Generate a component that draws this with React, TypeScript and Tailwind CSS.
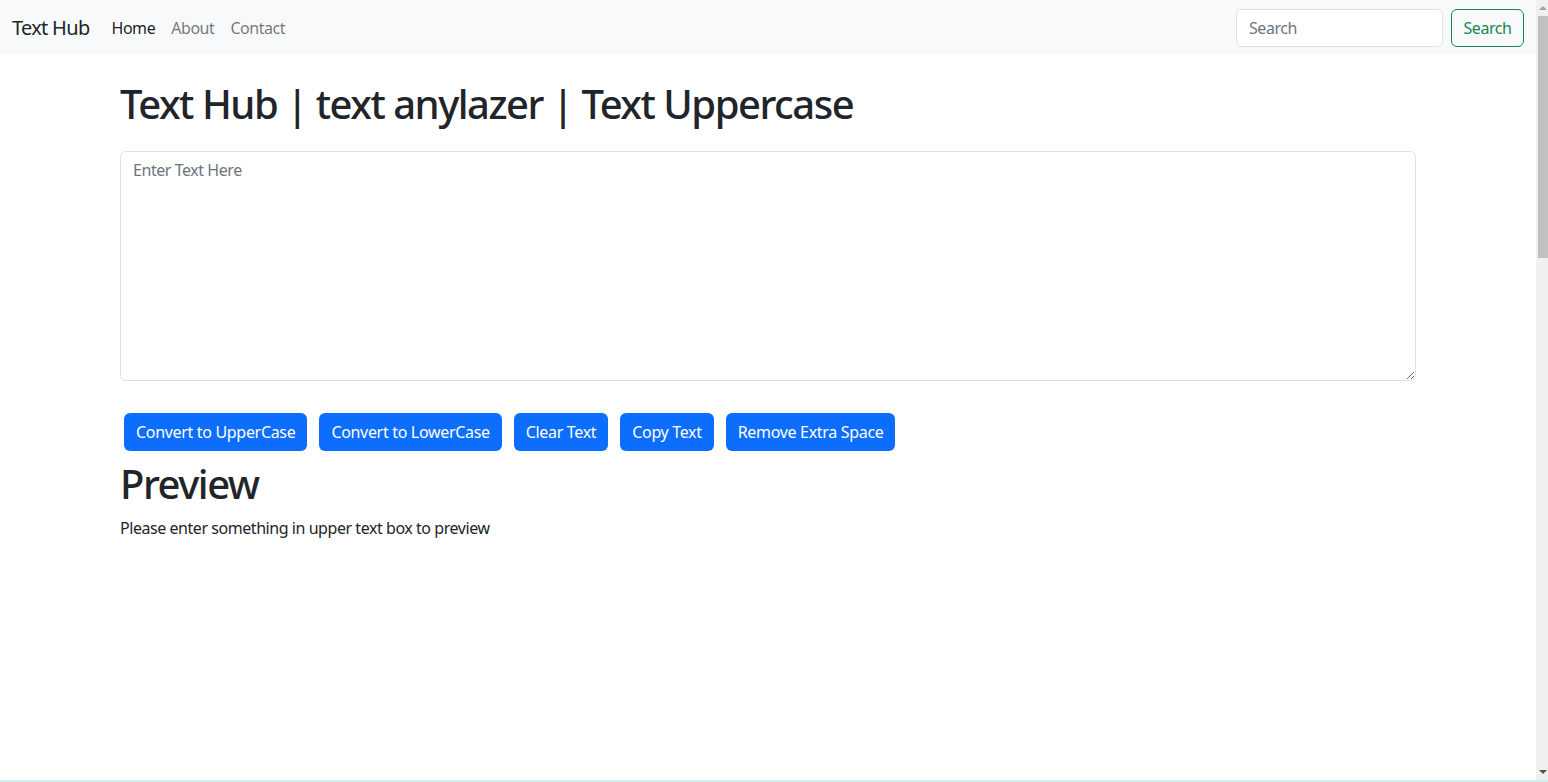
import { useState } from 'react'

const font = { fontFamily: '"Noto Sans", "Liberation Sans", sans-serif' }

function Navbar() {
  return (
    <nav className="h-[55px] bg-[#f8f9fa] flex items-center px-3">
      <span className="text-[20px] text-[#212529] mr-[14px] leading-[30px] tracking-[-0.035em]">Text Hub</span>
      <ul className="flex items-center text-[16px]">
        <li className="px-2 text-[rgba(0,0,0,0.9)]">Home</li>
        <li className="px-2 text-[rgba(0,0,0,0.55)]">About</li>
        <li className="px-2 text-[rgba(0,0,0,0.55)]">Contact</li>
      </ul>
      <form className="ml-auto flex items-center gap-2" onSubmit={(e) => e.preventDefault()}>
        <input
          type="search"
          placeholder="Search"
          className="w-[207px] h-[38px] px-3 rounded-[6px] border border-[#dee2e6] bg-white text-[16px] placeholder:text-[#6c757d] outline-none"
        />
        <button className="h-[38px] w-[73px] rounded-[6px] border border-[#198754] text-[#198754] text-[16px]">
          Search
        </button>
      </form>
    </nav>
  )
}

function Scrollbar() {
  return (
    <div className="w-3 bg-[#f0f0f0] flex flex-col items-stretch">
      <div className="h-4 flex items-center justify-center pl-[2px]">
        <div className="w-0 h-0 border-l-4 border-r-4 border-b-4 border-l-transparent border-r-transparent border-b-[#a3a3a3]" />
      </div>
      <div className="h-[242px] ml-[2px] bg-[#c1c1c1]" />
      <div className="flex-1" />
      <div className="h-4 flex items-center justify-center pl-[2px]">
        <div className="w-0 h-0 border-l-4 border-r-4 border-t-4 border-l-transparent border-r-transparent border-t-[#505050]" />
      </div>
    </div>
  )
}

export default function App() {
  const [text, setText] = useState('')

  const buttons = ['Convert to UpperCase', 'Convert to LowerCase', 'Clear Text', 'Copy Text', 'Remove Extra Space']

  return (
    <div className="h-[782px] flex flex-col overflow-hidden bg-white text-[#212529] tracking-[-0.028em]" style={font}>
      <div className="flex-1 flex min-h-0">
        <div className="flex-1 min-w-0">
          <Navbar />
          <div className="w-[1296px] mx-auto pt-[25px]">
            <h1 className="text-[40px] font-medium leading-[1.2] mb-[23px] tracking-[-0.037em]">
              Text Hub | text anylazer | Text Uppercase
            </h1>
            <textarea
              rows={9}
              value={text}
              onChange={(e) => setText(e.target.value)}
              placeholder="Enter Text Here"
              className="block w-full h-[230px] px-3 py-[6px] rounded-[6px] border border-[#dee2e6] text-[16px] leading-[1.5] placeholder:text-[#6c757d] outline-none"
            />
            <div className="flex gap-3 ml-1 mt-8">
              {buttons.map((b) => (
                <button
                  key={b}
                  className="h-[38px] px-3 rounded-[6px] bg-[#0d6efd] text-white text-[16px] tracking-[-0.02em]"
                >
                  {b}
                </button>
              ))}
            </div>
            <h2 className="text-[40px] font-medium leading-[1.2] mt-[9px] mb-2 tracking-[-0.037em]">Preview</h2>
            <p className="text-[16px] leading-[1.5]">
              {text.length > 0 ? text : 'Please enter something in upper text box to preview'}
            </p>
          </div>
        </div>
        <Scrollbar />
      </div>
      <div className="h-[2px] bg-[#d0f0f0]" />
    </div>
  )
}
